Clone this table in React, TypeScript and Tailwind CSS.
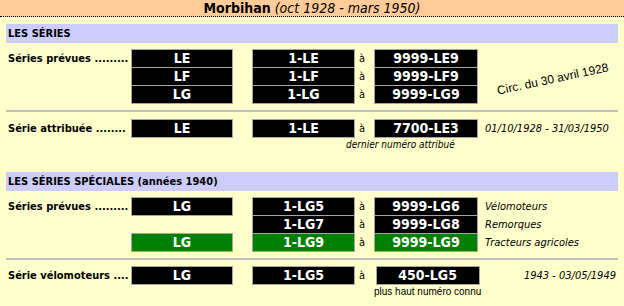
const font = "font-['DejaVu_Sans_Condensed','DejaVu_Sans',sans-serif]";

type Plate = { text: string; green?: boolean } | null;

type Row = {
  a: Plate;
  b: Plate;
  c: Plate;
  note?: string;
};

const PlateCell = ({ plate, width }: { plate: Plate; width: string }) => {
  if (!plate) return <div className={`${width} h-[19px]`} />;
  return (
    <div
      className={`${width} h-[19px] border border-[#a6a6a6] text-center text-[14px] leading-[17px] font-bold text-white ${
        plate.green ? "bg-[#008000]" : "bg-black"
      }`}
    >
      {plate.text}
    </div>
  );
};

const Block = ({ label, rows }: { label: string; rows: Row[] }) => (
  <div className="flex items-start">
    <div className="w-[125px] pl-[2px] text-[11px] leading-[19px] font-bold text-black whitespace-nowrap">
      {label}
    </div>
    <div className="flex flex-col">
      {rows.map((row, i) => (
        <div key={i} className={`flex items-start ${i > 0 ? "-mt-px" : ""}`}>
          <PlateCell plate={row.a} width="w-[102px]" />
          <div className="w-[19px]" />
          <PlateCell plate={row.b} width="w-[103px]" />
          <div className="w-[19px] pl-[4px] text-[11px] leading-[19px] text-black">à</div>
          <PlateCell plate={row.c} width="w-[104px]" />
          <div className="w-[140px] pl-[7px] text-[11px] leading-[19px] italic text-black whitespace-nowrap">
            {row.note}
          </div>
        </div>
      ))}
    </div>
  </div>
);

const SectionBar = ({ children }: { children: React.ReactNode }) => (
  <div className="h-[19px] bg-[#ccccff] pl-[2px] text-[11px] leading-[19px] font-bold text-black">
    {children}
  </div>
);

const Divider = () => <div className="h-[2px] bg-[#c0c0c0]" />;

export default function App() {
  return (
    <div className={`w-[624px] h-[306px] bg-[#ffffcc] overflow-hidden ${font}`}>
      <div className="h-[17px] bg-[#ffcc99] border-b border-dotted border-black text-center text-[14px] leading-[17px] text-black">
        <span className="font-bold">Morbihan</span> <span className="italic">(oct 1928 - mars 1950)</span>
      </div>

      <div className="px-[6px]">
        <div className="mt-[7px]">
          <SectionBar>LES SÉRIES</SectionBar>
        </div>

        <div className="mt-[6px] relative">
          <Block
            label="Séries prévues ........."
            rows={[
              { a: { text: "LE" }, b: { text: "1-LE" }, c: { text: "9999-LE9" } },
              { a: { text: "LF" }, b: { text: "1-LF" }, c: { text: "9999-LF9" } },
              { a: { text: "LG" }, b: { text: "1-LG" }, c: { text: "9999-LG9" } },
            ]}
          />
          <div className="absolute left-[490px] top-[23px] -rotate-12 font-['Liberation_Sans',Arial,sans-serif] text-[12px] leading-[14px] text-black whitespace-nowrap">
            Circ. du 30 avril 1928
          </div>
        </div>

        <div className="mt-[6px]">
          <Divider />
        </div>

        <div className="mt-[7px]">
          <Block
            label="Série attribuée ........"
            rows={[
              {
                a: { text: "LE" },
                b: { text: "1-LE" },
                c: { text: "7700-LE3" },
                note: "01/10/1928 - 31/03/1950",
              },
            ]}
          />
          <div className="pl-[340px] text-[10px] leading-[14px] italic text-black">
            dernier numéro attribué
          </div>
        </div>

        <div className="mt-[20px]">
          <SectionBar>LES SÉRIES SPÉCIALES (années 1940)</SectionBar>
        </div>

        <div className="mt-[6px]">
          <Block
            label="Séries prévues ........."
            rows={[
              {
                a: { text: "LG" },
                b: { text: "1-LG5" },
                c: { text: "9999-LG6" },
                note: "Vélomoteurs",
              },
              {
                a: null,
                b: { text: "1-LG7" },
                c: { text: "9999-LG8" },
                note: "Remorques",
              },
              {
                a: { text: "LG", green: true },
                b: { text: "1-LG9", green: true },
                c: { text: "9999-LG9", green: true },
                note: "Tracteurs agricoles",
              },
            ]}
          />
        </div>

        <div className="mt-[6px]">
          <Divider />
        </div>

        <div className="mt-[6px] flex items-start">
          <div className="w-[125px] pl-[2px] text-[11px] leading-[19px] font-bold text-black whitespace-nowrap">
            Série vélomoteurs ....
          </div>
          <PlateCell plate={{ text: "LG" }} width="w-[102px]" />
          <div className="w-[19px]" />
          <PlateCell plate={{ text: "1-LG5" }} width="w-[103px]" />
          <div className="w-[19px] pl-[4px] text-[11px] leading-[19px] text-black">à</div>
          <div className="flex flex-col items-center">
            <PlateCell plate={{ text: "450-LG5" }} width="w-[104px]" />
            <div className="mt-[1px] font-['Liberation_Sans',Arial,sans-serif] text-[10px] leading-[12px] text-black whitespace-nowrap">
              plus haut numéro connu
            </div>
          </div>
          <div className="flex-1 text-right pr-[2px] text-[11px] leading-[19px] italic text-black whitespace-nowrap">
            1943 - 03/05/1949
          </div>
        </div>
      </div>
    </div>
  );
}
